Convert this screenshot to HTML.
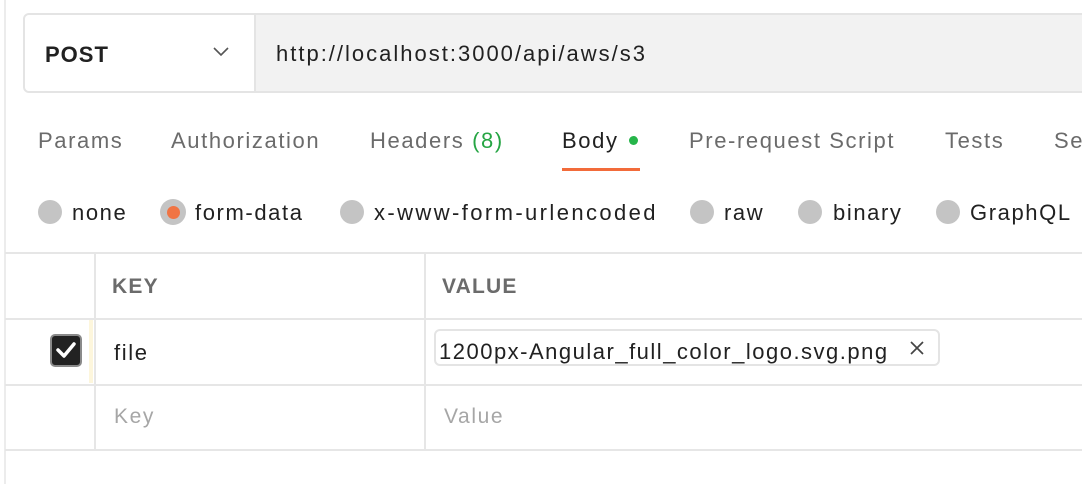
<html><head><style>
body{margin:0;width:1082px;height:484px;background:#fff;font-family:"Liberation Sans",sans-serif;position:relative;overflow:hidden}
.a{position:absolute;white-space:nowrap;letter-spacing:1.6px}
.tab{font-size:22px;color:#6b6b6b;top:128px}
.r{font-size:22px;color:#212121;top:200px}
.dot{position:absolute;width:24px;height:24px;border-radius:50%;background:#c4c4c4;top:200px}
.h{position:absolute;background:#e6e6e6;height:2px;left:5px;width:1077px}
.v{position:absolute;background:#e6e6e6;width:2px;top:253px;height:197px}
</style></head><body>
<div class="a" style="left:4px;top:0;width:2px;height:484px;background:#ececec"></div>
<div class="a" style="left:23px;top:13px;width:1070px;height:76px;border:2px solid #e4e4e4;border-radius:6px;background:#f2f2f2;overflow:hidden">
 <div class="a" style="left:0;top:0;width:229px;height:76px;background:#fff;border-right:2px solid #e4e4e4"></div>
 <div class="a" style="left:20px;top:27px;font-size:22px;font-weight:bold;color:#212121;letter-spacing:1px">POST</div>
 <svg class="a" style="left:188px;top:32px" width="16" height="10"><path d="M1 1 L8 8 L15 1" fill="none" stroke="#555" stroke-width="1.6"/></svg>
 <div class="a" style="left:251px;top:26px;font-size:22px;color:#212121;letter-spacing:2px">http://localhost:3000/api/aws/s3</div>
</div>
<div class="a tab" style="left:38px">Params</div>
<div class="a tab" style="left:171px">Authorization</div>
<div class="a tab" style="left:370px">Headers <span style="color:#26a544">(8)</span></div>
<div class="a tab" style="left:562px;color:#212121">Body</div>
<div class="a" style="left:629px;top:136px;width:9px;height:9px;border-radius:50%;background:#26b54a"></div>
<div class="a" style="left:562px;top:168px;width:78px;height:3px;background:#f26b3a"></div>
<div class="a tab" style="left:689px">Pre-request Script</div>
<div class="a tab" style="left:945px">Tests</div>
<div class="a tab" style="left:1054px">Se</div>
<div class="dot" style="left:38px"></div><div class="a r" style="left:72px">none</div>
<div class="dot" style="left:160px;width:26px;height:26px;top:199px"></div><div class="a" style="left:167px;top:206px;width:13px;height:13px;border-radius:50%;background:#f07444"></div>
<div class="a r" style="left:195px">form-data</div>
<div class="dot" style="left:340px"></div><div class="a r" style="left:374px;letter-spacing:2.4px">x-www-form-urlencoded</div>
<div class="dot" style="left:690px"></div><div class="a r" style="left:724px">raw</div>
<div class="dot" style="left:798px"></div><div class="a r" style="left:833px">binary</div>
<div class="dot" style="left:936px"></div><div class="a r" style="left:970px">GraphQL</div>
<div class="h" style="top:252px"></div><div class="h" style="top:318px"></div><div class="h" style="top:384px"></div><div class="h" style="top:449px"></div>
<div class="v" style="left:94px"></div><div class="v" style="left:424px"></div>
<div class="a" style="left:89px;top:320px;width:4px;height:63px;background:#fdf6dc"></div>
<div class="a" style="left:112px;top:275px;font-size:21px;font-weight:bold;color:#6b6b6b;letter-spacing:1.2px">KEY</div>
<div class="a" style="left:442px;top:275px;font-size:21px;font-weight:bold;color:#6b6b6b;letter-spacing:1.2px">VALUE</div>
<div class="a" style="left:50px;top:334px;width:32px;height:33px;border:2px solid #8a8a8a;border-radius:5px;background:#222;box-sizing:border-box"></div>
<svg class="a" style="left:55px;top:340px" width="22" height="20"><path d="M3 10 L9 16 L19 4" fill="none" stroke="#fff" stroke-width="3.5" stroke-linecap="round" stroke-linejoin="round"/></svg>
<div class="a" style="left:114px;top:340px;font-size:22px;color:#212121">file</div>
<div class="a" style="left:434px;top:329px;width:506px;height:37px;border:2px solid #e4e4e4;border-radius:6px;box-sizing:border-box"></div>
<div class="a" style="left:439px;top:339px;font-size:22px;color:#212121;letter-spacing:1.5px">1200px-Angular_full_color_logo.svg.png</div>
<svg class="a" style="left:909px;top:340px" width="16" height="16"><path d="M2 2L14 14M14 2L2 14" stroke="#444" stroke-width="1.7"/></svg>
<div class="a" style="left:114px;top:405px;font-size:21px;color:#a6a6a6">Key</div>
<div class="a" style="left:444px;top:405px;font-size:21px;color:#a6a6a6">Value</div>
</body></html>
